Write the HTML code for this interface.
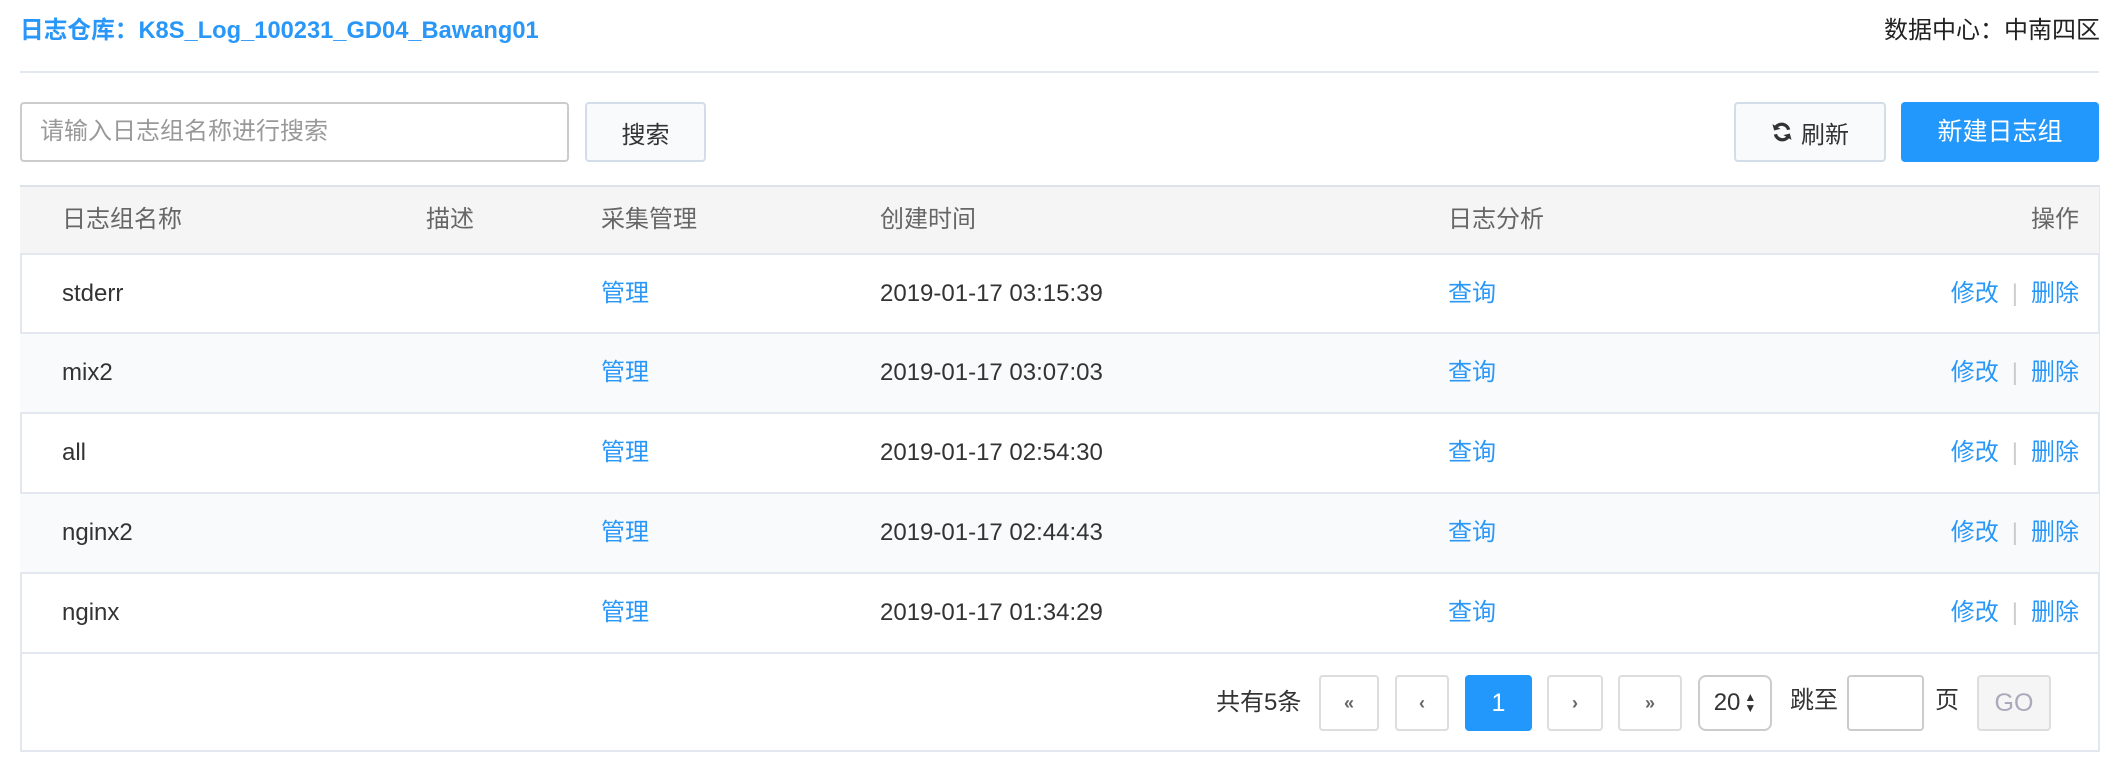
<!DOCTYPE html>
<html><head><meta charset="utf-8"><style>
*{box-sizing:border-box;margin:0;padding:0}
body{width:2122px;height:772px;background:#fff;font-family:"Liberation Sans","Noto Sans CJK SC",sans-serif;color:#333;font-size:24px;position:relative;overflow:hidden}
.a{position:absolute}
.blue{color:#2997f8}
.btn{position:absolute;border:2px solid #d3dde9;border-radius:4px;background:#f8fafc;display:flex;align-items:center;justify-content:center}
.row{position:absolute;left:20px;width:2079px;height:80px;border-bottom:2px solid #e3e8f0}
.row span{position:absolute;top:0;line-height:78px}
.sep{position:static!important;color:#ccc;margin:0 13px}
.pg{position:absolute;top:675px;height:56px;border:2px solid #ddd;border-radius:4px;display:flex;align-items:center;justify-content:center;color:#666;font-size:18px;font-weight:bold;background:#fff}
</style></head><body>
<div class="a blue" style="left:20px;top:15px;font-weight:bold;font-size:23.7px;line-height:32px">日志仓库：K8S_Log_100231_GD04_Bawang01</div>
<div class="a" style="right:22px;top:15px;font-size:24px;line-height:32px;color:#222">数据中心：中南四区</div>
<div class="a" style="left:20px;top:71px;width:2079px;height:2px;background:#e3e8f0"></div>
<div class="a" style="left:20px;top:102px;width:549px;height:60px;border:2px solid #ccc;border-radius:4px;padding-left:18px;line-height:56px;color:#999">请输入日志组名称进行搜索</div>
<div class="btn" style="left:585px;top:102px;width:121px;height:60px">搜索</div>
<div class="btn" style="left:1734px;top:102px;width:152px;height:60px"><svg width="22" height="22" viewBox="0 0 20 20" style="margin-right:8px"><path d="M16 8A6.5 6.5 0 0 0 4.5 5.5" fill="none" stroke="#333" stroke-width="3"/><path d="M2 2v6h6z" fill="#333" transform="rotate(-15 5 5)"/><path d="M4 12a6.5 6.5 0 0 0 11.5 2.5" fill="none" stroke="#333" stroke-width="3"/><path d="M18 18v-6h-6z" fill="#333" transform="rotate(-15 15 15)"/></svg>刷新</div>
<div class="a" style="left:1901px;top:102px;width:198px;height:60px;background:#2297fc;border-radius:4px;color:#fff;line-height:60px;text-align:center;font-size:25px">新建日志组</div>
<div class="a" style="left:20px;top:185px;width:2080px;height:567px;border:2px solid #e3e8f0"></div>
<div class="row" style="top:185px;height:70px;background:#f5f5f5;border-top:2px solid #dde2ea;color:#666">
<span style="left:42px;line-height:66px">日志组名称</span><span style="left:406px;line-height:66px">描述</span><span style="left:581px;line-height:66px">采集管理</span><span style="left:860px;line-height:66px">创建时间</span><span style="left:1428px;line-height:66px">日志分析</span><span style="right:20px;line-height:66px">操作</span></div>
<div class="row" style="top:255px;height:79px"><span style="left:42px">stderr</span><span class="blue" style="left:581px">管理</span><span style="left:860px">2019-01-17 03:15:39</span><span class="blue" style="left:1428px">查询</span><span class="blue" style="right:20px">修改<span class="sep">|</span>删除</span></div>
<div class="row" style="top:334px;background:#f9fafc"><span style="left:42px">mix2</span><span class="blue" style="left:581px">管理</span><span style="left:860px">2019-01-17 03:07:03</span><span class="blue" style="left:1428px">查询</span><span class="blue" style="right:20px">修改<span class="sep">|</span>删除</span></div>
<div class="row" style="top:414px"><span style="left:42px">all</span><span class="blue" style="left:581px">管理</span><span style="left:860px">2019-01-17 02:54:30</span><span class="blue" style="left:1428px">查询</span><span class="blue" style="right:20px">修改<span class="sep">|</span>删除</span></div>
<div class="row" style="top:494px;background:#f9fafc"><span style="left:42px">nginx2</span><span class="blue" style="left:581px">管理</span><span style="left:860px">2019-01-17 02:44:43</span><span class="blue" style="left:1428px">查询</span><span class="blue" style="right:20px">修改<span class="sep">|</span>删除</span></div>
<div class="row" style="top:574px"><span style="left:42px">nginx</span><span class="blue" style="left:581px">管理</span><span style="left:860px">2019-01-17 01:34:29</span><span class="blue" style="left:1428px">查询</span><span class="blue" style="right:20px">修改<span class="sep">|</span>删除</span></div>
<div class="a" style="left:1216px;top:675px;line-height:56px">共有5条</div>
<div class="pg" style="left:1319px;width:60px">«</div>
<div class="pg" style="left:1395px;width:54px">‹</div>
<div class="pg" style="left:1465px;width:67px;background:#2297fc;border-color:#2297fc;color:#fff;font-size:25px;font-weight:normal">1</div>
<div class="pg" style="left:1547px;width:56px">›</div>
<div class="pg" style="left:1618px;width:64px">»</div>
<div class="pg" style="left:1698px;width:74px;border-radius:8px;color:#333;font-size:24px;font-weight:normal;border-color:#ccc">20<span style="font-size:12px;line-height:11px;margin-left:4px;display:inline-block">▲<br>▼</span></div>
<div class="a" style="left:1790px;top:675px;line-height:52px">跳至</div>
<div class="pg" style="left:1847px;width:77px;border-color:#ccc"></div>
<div class="a" style="left:1935px;top:675px;line-height:52px">页</div>
<div class="pg" style="left:1977px;width:74px;background:#f5f5f5;color:#aab;font-size:25px;font-weight:normal">GO</div>
</body></html>
